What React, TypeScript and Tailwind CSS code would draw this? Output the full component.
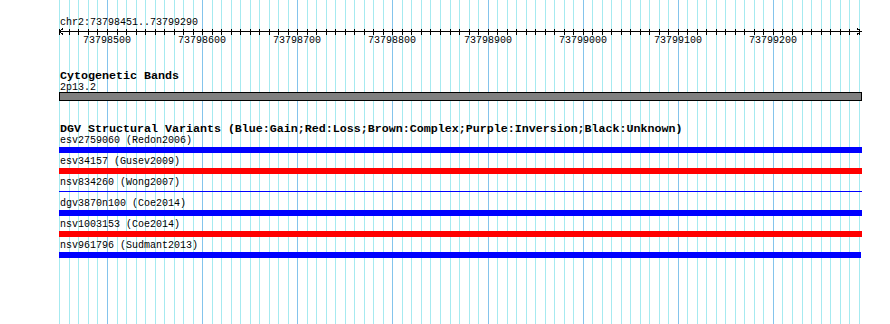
import React from 'react';

const START_BP = 73798450;
const STEPS = 84;
const X0 = 59.43;
const STEP_PX = 9.514;

const gridX = (k: number) => Math.round(X0 + k * STEP_PX);

const variants = [
  { id: 'esv2759060', study: 'Redon2006', kind: 'gain' },
  { id: 'esv34157', study: 'Gusev2009', kind: 'loss' },
  { id: 'nsv834260', study: 'Wong2007', kind: 'thin' },
  { id: 'dgv3870n100', study: 'Coe2014', kind: 'gain' },
  { id: 'nsv1003153', study: 'Coe2014', kind: 'loss' },
  { id: 'nsv961796', study: 'Sudmant2013', kind: 'gain' },
];

const mono = "font-['Liberation_Mono','DejaVu_Sans_Mono',monospace]";

function GridLines() {
  const ks = Array.from({ length: STEPS + 1 }, (_, k) => k);
  return (
    <svg className="absolute inset-0" width={890} height={324} shapeRendering="crispEdges">
      {ks.map((k) => {
        const x = gridX(k) + 0.5;
        const major = k % 10 === 5;
        return (
          <line key={k} x1={x} x2={x} y1={0} y2={324} stroke={major ? '#84c4ec' : '#a6eaf0'} strokeWidth={1} />
        );
      })}
    </svg>
  );
}

function Ruler() {
  const ks = Array.from({ length: STEPS + 1 }, (_, k) => k);
  const left = 59;
  return (
    <svg width={803} height={20} className="block" shapeRendering="crispEdges">
      <line x1={0} x2={803} y1={5.5} y2={5.5} stroke="#000" />
      {ks.map((k) => {
        const x = gridX(k) - left + 0.5;
        return <line key={k} x1={x} x2={x} y1={3} y2={9} stroke="#000" />;
      })}
      <polyline points="4,2.5 0.5,5.5 4,8.5" fill="none" stroke="#000" />
      <polyline points="798,2.5 802,5.5 798,8.5" fill="none" stroke="#000" />
      {ks
        .filter((k) => k % 10 === 5)
        .map((k) => (
          <text
            key={k}
            x={gridX(k) - left}
            y={17.4}
            textAnchor="middle"
            fontSize={10}
            fontFamily="'Liberation Mono','DejaVu Sans Mono',monospace"
            fill="#000"
          >
            {START_BP + k * 10}
          </text>
        ))}
    </svg>
  );
}

export default function App() {
  return (
    <div className="relative h-[324px] w-[890px] overflow-hidden bg-white">
      <GridLines />
      <div className={`relative ml-[59px] flex w-[803px] flex-col pt-[18px] text-black ${mono}`}>
        <div className="h-[8px] pl-px text-[10px] leading-[9px] whitespace-nowrap">chr2:73798451..73799290</div>
        <Ruler />

        <div className="mt-[24px] h-[11px] pl-px text-[11.67px] font-bold leading-[12px]">Cytogenetic Bands</div>
        <div className="h-[11px] pl-px text-[10px] leading-[13px]">2p13.2</div>
        <div className="h-[9px] border border-black bg-[#808080]" />

        <div className="mt-[22px] h-[11px] pl-px text-[11.67px] font-bold leading-[12px] whitespace-nowrap">
          DGV Structural Variants (Blue:Gain;Red:Loss;Brown:Complex;Purple:Inversion;Black:Unknown)
        </div>

        <div className="flex flex-col">
          {variants.map((v, i) => (
            <div key={v.id} className="flex h-[21px] flex-col">
              <div className="h-[13px] pl-px text-[10px] leading-[14px] whitespace-nowrap">
                {v.id} ({v.study})
              </div>
              <div className="h-[6px]">
                {v.kind === 'thin' ? (
                  <div className="mt-[2px] h-px bg-[#0000ff]" />
                ) : (
                  <div
                    className={`h-[6px] ${v.kind === 'gain' ? 'bg-[#0000ff]' : 'bg-[#ff0000]'} ${
                      i === variants.length - 1 ? 'w-[802px]' : 'w-full'
                    }`}
                  />
                )}
              </div>
            </div>
          ))}
        </div>
      </div>
    </div>
  );
}
